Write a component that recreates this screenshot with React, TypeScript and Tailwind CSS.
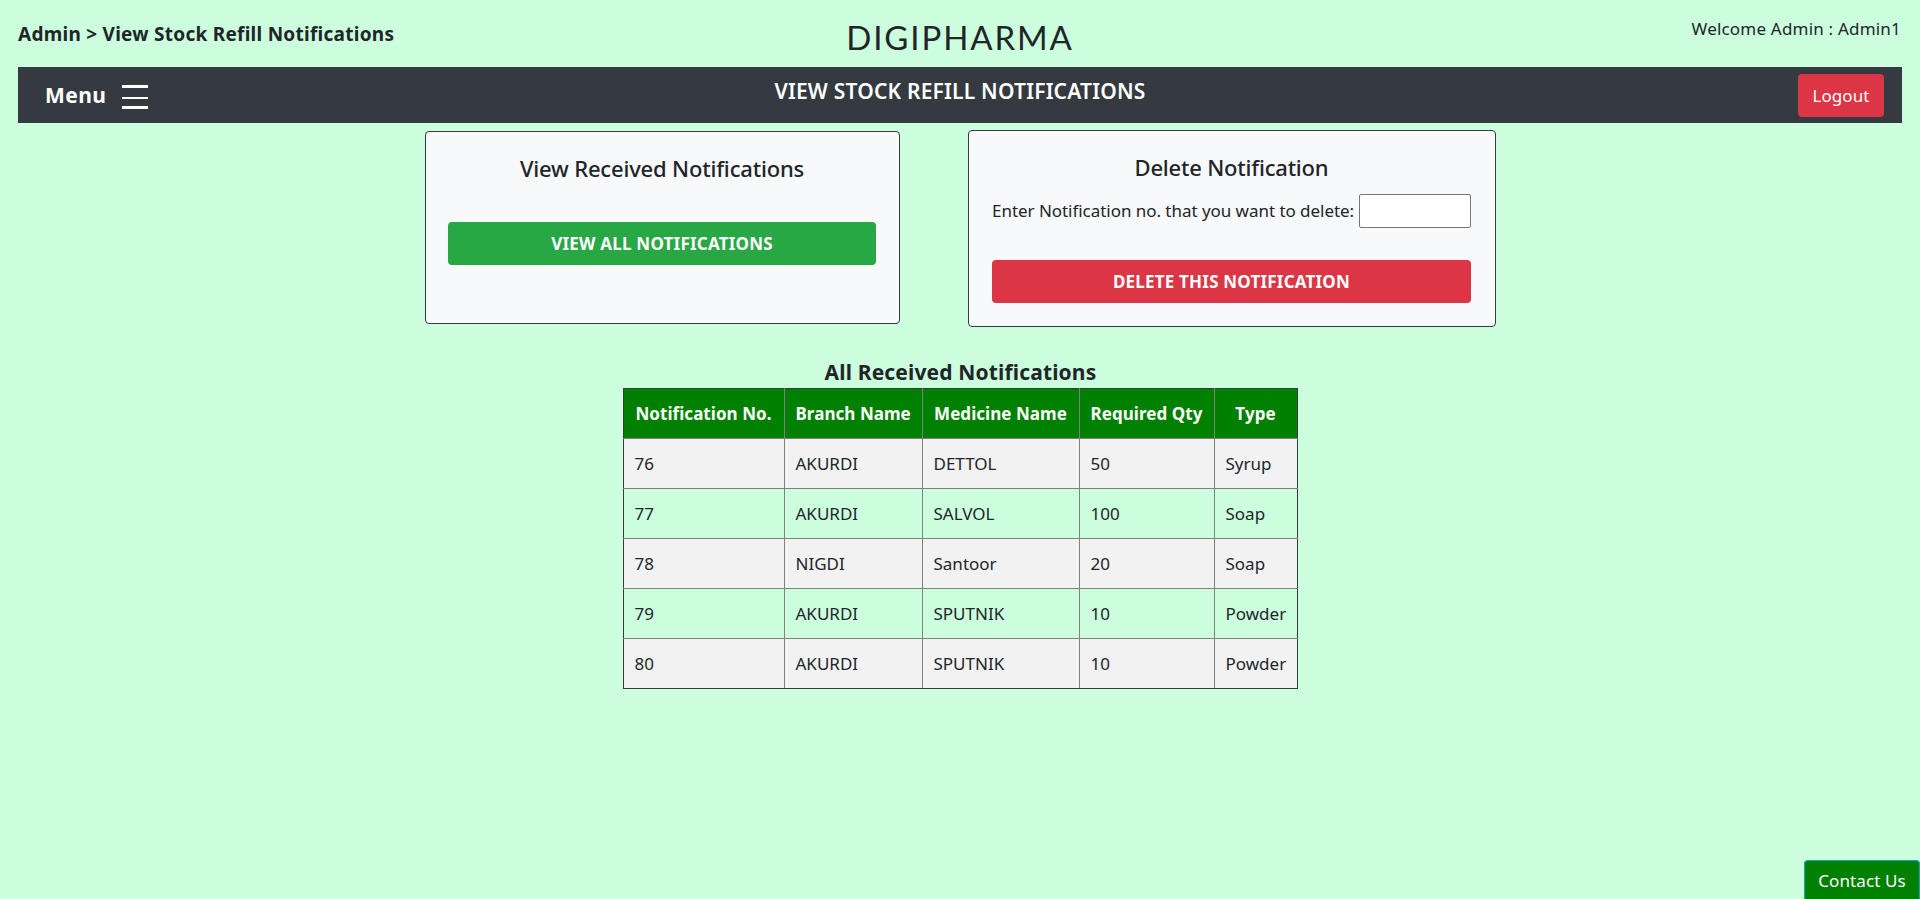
const font = "[font-family:'Noto_Sans','Open_Sans',sans-serif]";
const rows = [
  ["76", "AKURDI", "DETTOL", "50", "Syrup"],
  ["77", "AKURDI", "SALVOL", "100", "Soap"],
  ["78", "NIGDI", "Santoor", "20", "Soap"],
  ["79", "AKURDI", "SPUTNIK", "10", "Powder"],
  ["80", "AKURDI", "SPUTNIK", "10", "Powder"],
];
const heads = ["Notification No.", "Branch Name", "Medicine Name", "Required Qty", "Type"];
const widths = ["w-[161px]", "w-[138px]", "w-[157px]", "w-[135px]", "w-[83px]"];
const edge = "first:border-l-[#343a40] last:border-r-[#343a40]";

export default function App() {
  return (
    <div className={`${font} relative min-h-[899px] bg-[#ccffdd] text-[#212529] text-[16px] overflow-hidden`}>
      <header className="h-[67px] px-[18px] grid grid-cols-3">
        <div className="pt-[20px] text-[19px] font-bold leading-[28px] tracking-[0.26px] whitespace-nowrap">Admin &gt; View Stock Refill Notifications</div>
        <div className="pt-[16px] text-center text-[33px] leading-[42px] tracking-[1.9px] font-['Lato'] ">DIGIPHARMA</div>
        <div className="pt-[17px] pr-[1px] text-right text-[17px] leading-[24px] tracking-[0.2px]">Welcome Admin : Admin1</div>
      </header>
      <nav className="mx-[18px] h-[56px] bg-[#343a40] text-white grid grid-cols-3 items-start">
        <div className="flex items-center gap-[16px] pl-[27px] h-full">
          <span className="text-[21px] font-bold tracking-[0.4px] mt-[2px]">Menu</span>
          <svg width="26" height="24" viewBox="0 0 26 24" className="block mt-[3px]">
            <rect x="0" y="0" width="26" height="3" fill="#fff" />
            <rect x="0" y="12" width="26" height="2" fill="#fff" />
            <rect x="0" y="21" width="26" height="3" fill="#fff" />
          </svg>
        </div>
        <div className="pt-[12px] text-center text-[21px] leading-[24px] font-semibold whitespace-nowrap tracking-[0.2px]">VIEW STOCK REFILL NOTIFICATIONS</div>
        <div className="flex justify-end pt-[7px] pr-[18px]">
          <button className="h-[43px] w-[86px] rounded-[4px] bg-[#dc3545] text-white text-[17px] tracking-[0.1px]">Logout</button>
        </div>
      </nav>
      <main className="flex flex-col items-center">
        <div className="flex items-start w-[1071px] ml-[1px] gap-[68px]">
          <section className="mt-[8px] w-[475px] h-[193px] bg-[#f8f9fa] border border-[#343a40] rounded-[4px] pl-[22px] pr-[23px]">
            <h2 className="mt-[21px] text-center text-[22px] leading-[30px] font-medium tracking-[-0.18px]">View Received Notifications</h2>
            <button className="mt-[39px] w-full h-[43px] rounded-[4px] bg-[#28a745] text-white text-[17px] font-bold tracking-[0.22px]">VIEW ALL NOTIFICATIONS</button>
          </section>
          <section className="mt-[7px] w-[528px] h-[197px] bg-[#f8f9fa] border border-[#343a40] rounded-[4px] pl-[23px] pr-[24px]">
            <h2 className="mt-[21px] text-center text-[22px] leading-[30px] font-medium tracking-[-0.2px]">Delete Notification</h2>
            <div className="mt-[12px] flex items-center gap-[5px]">
              <span className="text-[17px] whitespace-nowrap tracking-[-0.04px]">Enter Notification no. that you want to delete:</span>
              <input aria-label="Notification no." className="flex-1 min-w-0 h-[34px] bg-white border border-[#767676] rounded-[2px]" />
            </div>
            <button className="mt-[32px] w-full h-[43px] rounded-[4px] bg-[#dc3545] text-white text-[17px] font-bold tracking-[0.2px]">DELETE THIS NOTIFICATION</button>
          </section>
        </div>
        <h3 className="mt-[30px] ml-[1px] text-[21px] leading-[30px] font-bold text-center tracking-[0.15px]">All Received Notifications</h3>
        <table className="mt-[1px] w-[674px] table-fixed border-collapse text-[17px]">
          <thead>
            <tr className="h-[50px] bg-[#008000] text-white">
              {heads.map((h, i) => (
                <th key={h} className={`${widths[i]} ${edge} border border-[#808080] border-t-[#343a40] px-[11px] font-bold whitespace-nowrap text-center tracking-[0.05px]`}>{h}</th>
              ))}
            </tr>
          </thead>
          <tbody>
            {rows.map((r, i) => (
              <tr key={r[0]} className={`h-[50px] ${i % 2 === 0 ? "bg-[#f2f2f2]" : ""}`}>
                {r.map((c, j) => (
                  <td key={j} className={`${edge} border border-[#808080] ${i === rows.length - 1 ? "border-b-[#343a40]" : ""} px-[11px] pt-[1px] text-left whitespace-nowrap tracking-[0px]`}>{c}</td>
                ))}
              </tr>
            ))}
          </tbody>
        </table>
      </main>
      <button className="absolute right-0 bottom-0 w-[116px] h-[39px] pt-[2px] bg-[#008000] border border-b-0 border-[#17a2b8] rounded-t-[4px] text-white text-[17px] tracking-[0.1px]">Contact Us</button>
    </div>
  );
}
